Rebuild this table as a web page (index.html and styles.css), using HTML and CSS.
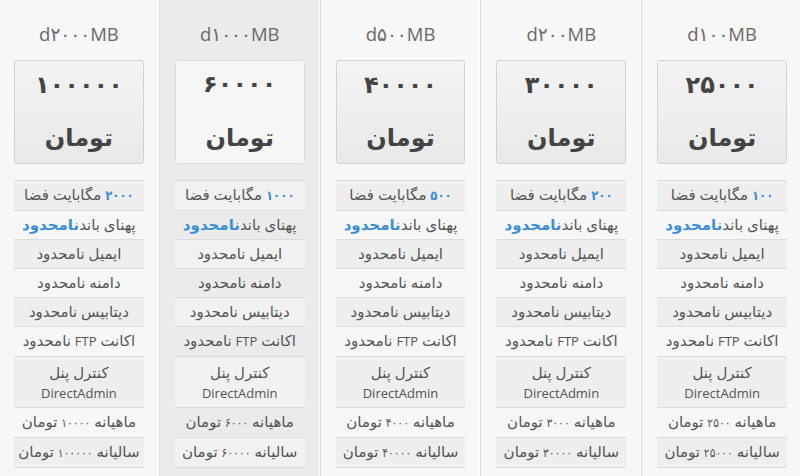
FILE: index.html
```html
<!DOCTYPE html>
<html lang="fa">
<head>
<meta charset="utf-8">
<title>Hosting plans</title>
<link rel="stylesheet" href="styles.css">
</head>
<body>
<div class="plans" dir="rtl">
  <div class="plan">
    <div class="plan-title" dir="ltr">d۱۰۰MB</div>
    <div class="price"><span class="amount">۲۵۰۰۰</span><span class="unit">تومان</span></div>
    <ul class="features">
      <li><b class="hl num">۱۰۰</b> مگابایت فضا</li>
      <li>پهنای باند<b class="hl">نامحدود</b></li>
      <li>ایمیل نامحدود</li>
      <li>دامنه نامحدود</li>
      <li>دیتابیس نامحدود</li>
      <li>اکانت <span class="latin">FTP</span> نامحدود</li>
      <li class="two">کنترل پنل<br><span class="latin">DirectAdmin</span></li>
      <li>ماهیانه <span class="num">۲۵۰۰</span> تومان</li>
      <li>سالیانه <span class="num">۲۵۰۰۰</span> تومان</li>
    </ul>
  </div>
  <div class="plan">
    <div class="plan-title" dir="ltr">d۲۰۰MB</div>
    <div class="price"><span class="amount">۳۰۰۰۰</span><span class="unit">تومان</span></div>
    <ul class="features">
      <li><b class="hl num">۲۰۰</b> مگابایت فضا</li>
      <li>پهنای باند<b class="hl">نامحدود</b></li>
      <li>ایمیل نامحدود</li>
      <li>دامنه نامحدود</li>
      <li>دیتابیس نامحدود</li>
      <li>اکانت <span class="latin">FTP</span> نامحدود</li>
      <li class="two">کنترل پنل<br><span class="latin">DirectAdmin</span></li>
      <li>ماهیانه <span class="num">۳۰۰۰</span> تومان</li>
      <li>سالیانه <span class="num">۳۰۰۰۰</span> تومان</li>
    </ul>
  </div>
  <div class="plan">
    <div class="plan-title" dir="ltr">d۵۰۰MB</div>
    <div class="price"><span class="amount">۴۰۰۰۰</span><span class="unit">تومان</span></div>
    <ul class="features">
      <li><b class="hl num">۵۰۰</b> مگابایت فضا</li>
      <li>پهنای باند<b class="hl">نامحدود</b></li>
      <li>ایمیل نامحدود</li>
      <li>دامنه نامحدود</li>
      <li>دیتابیس نامحدود</li>
      <li>اکانت <span class="latin">FTP</span> نامحدود</li>
      <li class="two">کنترل پنل<br><span class="latin">DirectAdmin</span></li>
      <li>ماهیانه <span class="num">۴۰۰۰</span> تومان</li>
      <li>سالیانه <span class="num">۴۰۰۰۰</span> تومان</li>
    </ul>
  </div>
  <div class="plan featured">
    <div class="plan-title" dir="ltr">d۱۰۰۰MB</div>
    <div class="price"><span class="amount">۶۰۰۰۰</span><span class="unit">تومان</span></div>
    <ul class="features">
      <li><b class="hl num">۱۰۰۰</b> مگابایت فضا</li>
      <li>پهنای باند<b class="hl">نامحدود</b></li>
      <li>ایمیل نامحدود</li>
      <li>دامنه نامحدود</li>
      <li>دیتابیس نامحدود</li>
      <li>اکانت <span class="latin">FTP</span> نامحدود</li>
      <li class="two">کنترل پنل<br><span class="latin">DirectAdmin</span></li>
      <li>ماهیانه <span class="num">۶۰۰۰</span> تومان</li>
      <li>سالیانه <span class="num">۶۰۰۰۰</span> تومان</li>
    </ul>
  </div>
  <div class="plan">
    <div class="plan-title" dir="ltr">d۲۰۰۰MB</div>
    <div class="price"><span class="amount">۱۰۰۰۰۰</span><span class="unit">تومان</span></div>
    <ul class="features">
      <li><b class="hl num">۲۰۰۰</b> مگابایت فضا</li>
      <li>پهنای باند<b class="hl">نامحدود</b></li>
      <li>ایمیل نامحدود</li>
      <li>دامنه نامحدود</li>
      <li>دیتابیس نامحدود</li>
      <li>اکانت <span class="latin">FTP</span> نامحدود</li>
      <li class="two">کنترل پنل<br><span class="latin">DirectAdmin</span></li>
      <li>ماهیانه <span class="num">۱۰۰۰۰</span> تومان</li>
      <li>سالیانه <span class="num">۱۰۰۰۰۰</span> تومان</li>
    </ul>
  </div>
</div>
</body>
</html>
```

FILE: styles.css
```css
html, body {
  margin: 0;
  padding: 0;
  background: #f7f7f7;
  overflow: hidden;
}

body {
  font-family: "Open Sans", "DejaVu Sans", sans-serif;
  color: #555;
}

.plans {
  display: grid;
  grid-template-columns: repeat(5, 1fr);
  width: 804px;
  margin-left: -2px;
  height: 476px;
}

.plan {
  background: #f7f7f7;
  border-left: 1px solid #dedede;
  box-shadow: inset -1px 0 0 #fdfdfd;
  display: flex;
  flex-direction: column;
  align-items: stretch;
  padding: 0 15px;
}

.plan.featured {
  background: #ebebeb;
}

.plan-title {
  height: 60px;
  box-sizing: border-box;
  padding-top: 6px;
  display: flex;
  align-items: center;
  justify-content: center;
  font-size: 18.5px;
  color: #6a6a6a;
}

.price {
  height: 104px;
  box-sizing: border-box;
  border: 1px solid #d2d2d2;
  border-radius: 3px;
  background: linear-gradient(#f3f3f3, #e9e9e9);
  display: flex;
  flex-direction: column;
  align-items: center;
  color: #444;
  font-family: "DejaVu Sans", sans-serif;
  font-weight: bold;
}

.featured .price {
  background: #f6f6f6;
  border-color: #dcdcdc;
}

.amount {
  height: 50px;
  display: flex;
  align-items: center;
  justify-content: center;
  align-self: stretch;
  font-size: 24px;
  padding-bottom: 3px;
  box-sizing: border-box;
}

.unit {
  flex: 1;
  display: flex;
  align-items: center;
  font-size: 24px;
  padding-top: 2px;
}

.featured .amount {
  border-bottom: 1px solid #f0f0f0;
}

.features {
  list-style: none;
  margin: 16px 0 0;
  padding: 0;
  border-top: 1px solid #dcdcdc;
}

.features li {
  font-size: 15px;
  line-height: 19.5px;
  padding: 4px 0 4.5px;
  border-bottom: 1px solid #dcdcdc;
  text-align: center;
  color: #555;
  white-space: nowrap;
}

.features li:nth-child(odd) {
  background: #eeeeee;
}

.featured .features li:nth-child(odd) {
  background: #f1f1f1;
}

.features li.two {
  line-height: 20px;
  padding: 4.5px 0 4.5px;
}

.latin {
  font-size: 13px;
}

.num {
  font-size: 12px;
  font-stretch: condensed;
}

.hl.num {
  font-size: 13px;
}

.hl {
  color: #3b8ed8;
  font-weight: bold;
}
```
